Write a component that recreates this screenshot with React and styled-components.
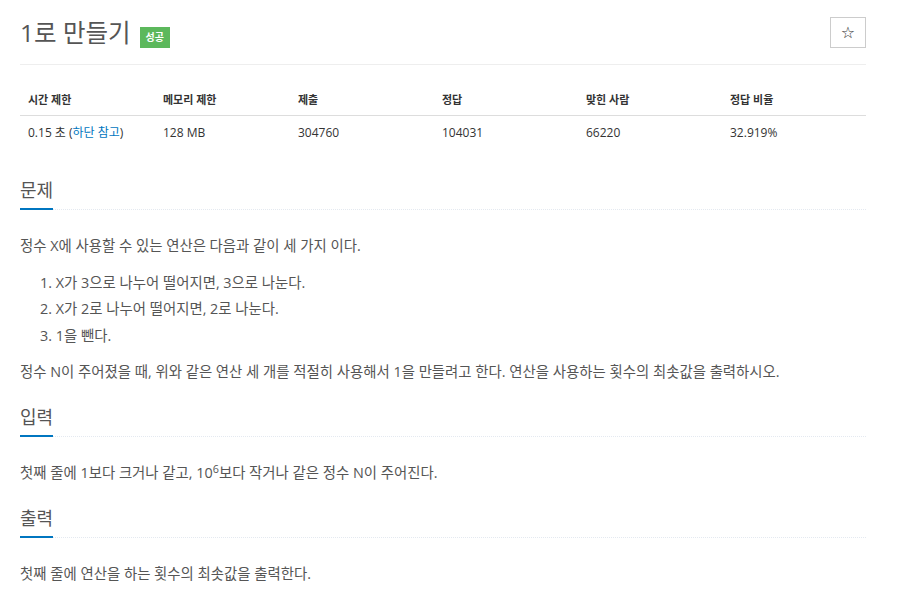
import React from "react";
import styled, { createGlobalStyle } from "styled-components";

const GlobalStyle = createGlobalStyle`
  body {
    margin: 0;
    background: #fff;
    font-family: "Open Sans", "Noto Sans CJK KR", sans-serif;
    color: #555;
  }
`;

const Page = styled.div`
  width: 846px;
  margin-left: 20px;
`;

const Header = styled.div`
  display: flex;
  justify-content: space-between;
  align-items: flex-start;
  box-sizing: border-box;
  height: 65px;
  padding-top: 17px;
  border-bottom: 1px solid #eee;
`;

const TitleWrap = styled.div`
  display: flex;
  align-items: center;
`;

const Title = styled.h1`
  margin: 0;
  font-size: 24.5px;
  line-height: 31px;
  font-weight: 400;
  color: #555;
`;

const Badge = styled.span`
  margin: 9px 0 0 9px;
  padding: 0 6px;
  background: #5cb85c;
  color: #fff;
  font-size: 10px;
  font-weight: 700;
  line-height: 21px;
`;

const StarButton = styled.button`
  width: 36px;
  height: 31px;
  padding: 0;
  border: 1px solid #ccc;
  background: #fff;
  color: #333;
  font-family: "DejaVu Sans", sans-serif;
  font-size: 16px;
  line-height: 1;
  cursor: pointer;
`;

const InfoTable = styled.table`
  width: 846px;
  margin: 16px 0 27px;
  border-collapse: collapse;
  table-layout: fixed;
`;

const Th = styled.th`
  box-sizing: border-box;
  width: ${p => p.$w}px;
  padding: 10px 8px 6px;
  text-align: left;
  font-size: 11px;
  line-height: 18px;
  font-weight: 700;
  color: #333;
  border-bottom: 1px solid #ddd;
`;

const Td = styled.td`
  padding: 8px;
  font-size: 12px;
  line-height: 18px;
  color: #333;
`;

const Link = styled.a`
  color: #0076c0;
  text-decoration: none;
`;

const Headline = styled.div`
  margin: 18px 0 23px;
  border-bottom: 1px dotted #e4e9f0;
`;

const HeadTitle = styled.h2`
  display: inline-block;
  margin: 0 0 -1px;
  padding-bottom: 5px;
  font-size: 18px;
  line-height: 26px;
  font-weight: 400;
  color: #555;
  border-bottom: 2px solid #0076c0;
`;

const Para = styled.p`
  margin: 0 0 10px;
  font-size: 14.4px;
  line-height: 26.6px;
`;

const List = styled.ol`
  margin: 0 0 10px;
  padding-left: 20px;
  list-style-position: inside;
  font-size: 14.4px;
  line-height: 26.6px;
`;

const Sup = styled.sup`
  position: relative;
  top: -0.5em;
  font-size: 75%;
  line-height: 0;
  vertical-align: baseline;
`;

const columns = [
  { label: "시간 제한", w: 135 },
  { label: "메모리 제한", w: 135 },
  { label: "제출", w: 144 },
  { label: "정답", w: 144 },
  { label: "맞힌 사람", w: 144 },
  { label: "정답 비율", w: 144 }
];

const Section = ({ title, children }) => (
  <>
    <Headline>
      <HeadTitle>{title}</HeadTitle>
    </Headline>
    {children}
  </>
);

export default function App() {
  return (
    <Page>
      <GlobalStyle />
      <Header>
        <TitleWrap>
          <Title>1로 만들기</Title>
          <Badge>성공</Badge>
        </TitleWrap>
        <StarButton>☆</StarButton>
      </Header>

      <InfoTable>
        <thead>
          <tr>
            {columns.map(c => (
              <Th key={c.label} $w={c.w}>
                {c.label}
              </Th>
            ))}
          </tr>
        </thead>
        <tbody>
          <tr>
            <Td>
              0.15 초 (<Link href="#">하단 참고</Link>)
            </Td>
            <Td>128 MB</Td>
            <Td>304760</Td>
            <Td>104031</Td>
            <Td>66220</Td>
            <Td>32.919%</Td>
          </tr>
        </tbody>
      </InfoTable>

      <Section title="문제">
        <Para>정수 X에 사용할 수 있는 연산은 다음과 같이 세 가지 이다.</Para>
        <List>
          <li>X가 3으로 나누어 떨어지면, 3으로 나눈다.</li>
          <li>X가 2로 나누어 떨어지면, 2로 나눈다.</li>
          <li>1을 뺀다.</li>
        </List>
        <Para>
          정수 N이 주어졌을 때, 위와 같은 연산 세 개를 적절히 사용해서 1을
          만들려고 한다. 연산을 사용하는 횟수의 최솟값을 출력하시오.
        </Para>
      </Section>

      <Section title="입력">
        <Para>
          첫째 줄에 1보다 크거나 같고, 10<Sup>6</Sup>보다 작거나 같은 정수
          N이 주어진다.
        </Para>
      </Section>

      <Section title="출력">
        <Para>첫째 줄에 연산을 하는 횟수의 최솟값을 출력한다.</Para>
      </Section>
    </Page>
  );
}
